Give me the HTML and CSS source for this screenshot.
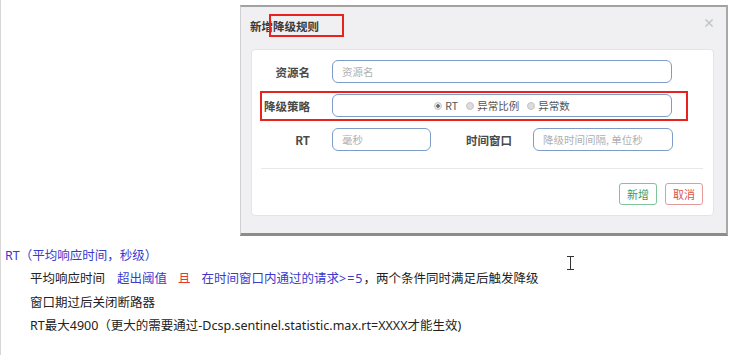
FILE: index.html
```html
<!DOCTYPE html>
<html lang="zh-CN">
<head>
    <meta charset="UTF-8">
    <meta name="viewport" content="width=device-width, initial-scale=1.0">
    <title>降级规则</title>
    <link rel="stylesheet" href="styles.css">
</head>
<body>
    <div class="page">
        <div class="modal">
            <div class="modal-head">
                <span class="modal-title">新增降级规则</span>
                <span class="close">×</span>
            </div>
            <div class="panel">
                <div class="form-row">
                    <label class="label">资源名</label>
                    <div class="input wide">资源名</div>
                </div>
                <div class="form-row">
                    <label class="label">降级策略</label>
                    <div class="input wide radios">
                        <span class="radio checked"></span><span class="opt">RT</span>
                        <span class="radio"></span><span class="opt">异常比例</span>
                        <span class="radio"></span><span class="opt">异常数</span>
                    </div>
                </div>
                <div class="form-row">
                    <label class="label">RT</label>
                    <div class="input short">毫秒</div>
                    <label class="label mid">时间窗口</label>
                    <div class="input medium">降级时间间隔, 单位秒</div>
                </div>
                <div class="sep"></div>
                <div class="actions">
                    <button class="btn btn-ok">新增</button>
                    <button class="btn btn-cancel">取消</button>
                </div>
            </div>
            <div class="mark mark-title"></div>
            <div class="mark mark-row"></div>
        </div>

        <div class="notes">
            <p class="blue first">RT（平均响应时间，秒级）</p>
            <p>平均响应时间<span class="blue gap">超出阈值</span><span class="red gap">且</span><span class="blue">在时间窗口内通过的请求<span class="op">&gt;=5</span></span>，两个条件同时满足后触发降级</p>
            <p>窗口期过后关闭断路器</p>
            <p>RT最大4900（更大的需要通过-Dcsp.sentinel.statistic.max.rt=XXXX才能生效)</p>
        </div>

        <svg class="cursor" width="9" height="14" viewBox="0 0 9 14">
            <path d="M1 0.5h7M4.5 0.5v13M1 13.5h7" stroke="#333" stroke-width="1" fill="none"/>
        </svg>
    </div>
</body>
</html>
```

FILE: styles.css
```css
body {
    margin: 0;
    background: #fff;
    font-family: "Noto Sans CJK SC", "Noto Sans", sans-serif;
}
.page {
    position: relative;
    height: 355px;
    border-left: 1px solid #d6d6d6;
    box-sizing: border-box;
    padding-top: 5px;
}
.modal {
    position: relative;
    box-sizing: border-box;
    margin-left: 239px;
    width: 488px;
    height: 231px;
    background: #f0f0f3;
    border: 1px solid #cfcfd2;
    border-top: 2px solid #a2a2a2;
    border-bottom: 3px solid #8c8c8c;
    border-right: 2px solid #a8a8a8;
}
.modal-head {
    display: flex;
    justify-content: space-between;
    align-items: flex-start;
    height: 42px;
    box-sizing: border-box;
    padding: 12px 11px 0 9px;
}
.modal-title {
    font-size: 11.5px;
    line-height: 14px;
    font-weight: 700;
    color: #3a3a3a;
}
.close {
    font-size: 12px;
    line-height: 10px;
    color: #c2c2c2;
    font-weight: 700;
    margin-top: -1px;
}
.panel {
    margin: 0 12px 0 10px;
    height: 167px;
    box-sizing: border-box;
    background: #fff;
    border: 1px solid #e4e4e8;
    border-radius: 4px;
    padding-top: 10px;
}
.form-row {
    display: flex;
    align-items: center;
    height: 23px;
    margin-bottom: 11px;
}
.label {
    width: 58px;
    margin-right: 22px;
    text-align: right;
    font-size: 11.5px;
    font-weight: 700;
    color: #4a4a4a;
}
.label.mid {
    width: 81px;
    margin-right: 21px;
}
.input {
    box-sizing: border-box;
    height: 23px;
    border: 1px solid #7e9cc8;
    border-radius: 6px;
    padding-left: 9px;
    font-size: 10.5px;
    line-height: 21px;
    color: #b0b0b0;
}
.wide { width: 340px; }
.short { width: 99px; }
.medium { width: 140px; }
.radios {
    display: flex;
    justify-content: center;
    align-items: center;
    color: #555;
    padding-left: 0;
}
.radio {
    width: 6px;
    height: 6px;
    border-radius: 50%;
    background: #dcdcdc;
    border: 1px solid #c4c4c4;
    margin-right: 3px;
}
.radio.checked {
    background: radial-gradient(circle, #666 35%, #e8e8e8 45%);
}
.opt {
    margin-right: 8px;
}
.opt:last-child {
    margin-right: 0;
}
.sep {
    margin: 17px 10px 0 9px;
    border-top: 1px solid #e8e8ea;
}
.actions {
    display: flex;
    justify-content: flex-end;
    gap: 8px;
    margin: 14px 10px 0 0;
}
.btn {
    box-sizing: border-box;
    width: 38px;
    height: 22px;
    padding: 0;
    background: #fff;
    border-radius: 3px;
    font-family: inherit;
    font-size: 11px;
}
.btn-ok {
    border: 1px solid #7fc49a;
    color: #3f9a5f;
}
.btn-cancel {
    border: 1px solid #e59a9a;
    color: #d9534f;
}
.mark {
    position: absolute;
    border: 2px solid #e8221c;
    box-sizing: border-box;
}
.mark-title {
    left: 28px;
    top: 7px;
    width: 75px;
    height: 23px;
}
.mark-row {
    left: 19px;
    top: 84px;
    width: 428px;
    height: 30px;
}
.notes {
    margin-top: 8px;
    font-family: "Noto Sans", "Noto Sans CJK SC", sans-serif;
    font-size: 12.5px;
    line-height: 23.3px;
    color: #222;
}
.notes p {
    margin: 0 0 0 29px;
}
.notes p.first {
    margin-left: 4px;
}
.blue { color: #3a3acd; }
.red { color: #e8362e; }
.gap {
    margin-left: 12px;
    margin-right: 11px;
}
.red.gap {
    margin-left: 0;
}
.op {
    letter-spacing: 1px;
}
.cursor {
    position: absolute;
    left: 565px;
    top: 256px;
}
```
